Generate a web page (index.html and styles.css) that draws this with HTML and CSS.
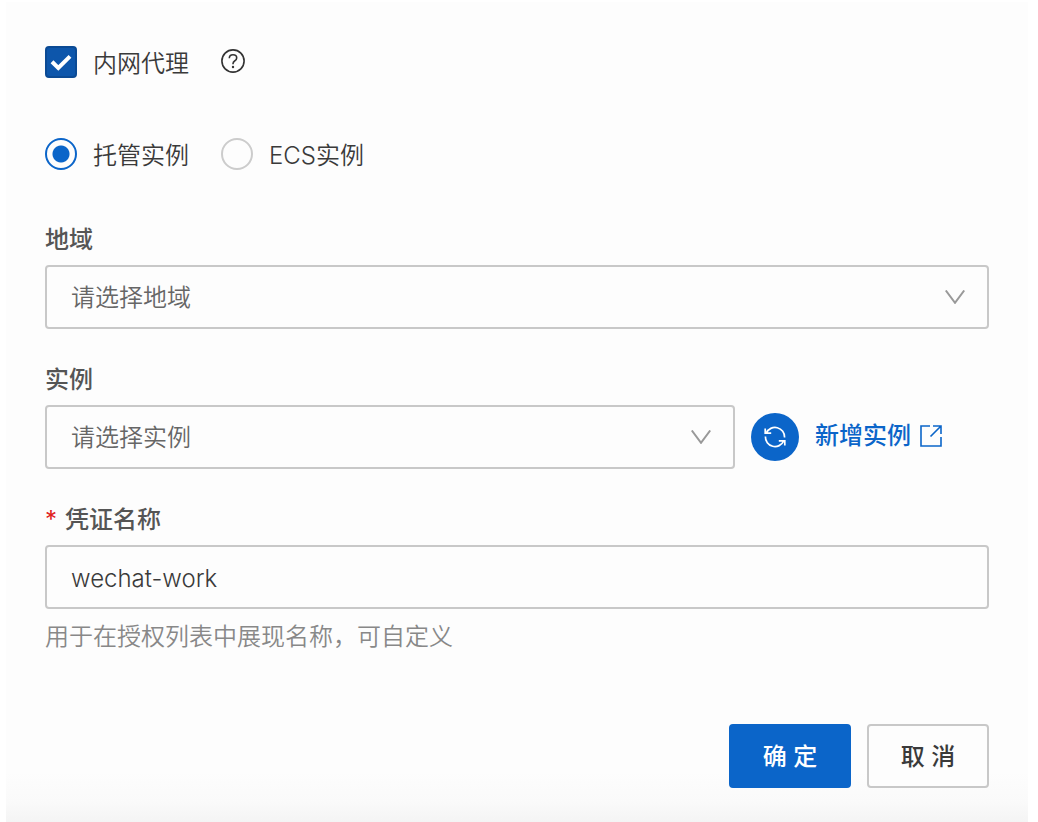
FILE: index.html
```html
<!DOCTYPE html>
<html lang="zh-CN">
<head>
<meta charset="utf-8">
<meta name="viewport" content="width=device-width, initial-scale=1">
<title>内网代理</title>
<link rel="stylesheet" href="styles.css">
</head>
<body>
<form class="panel">
  <div class="options">
    <label class="option">
      <span class="stack">
        <input class="checkbox" type="checkbox" checked>
        <svg class="tick" width="32" height="32" viewBox="0 0 32 32" aria-hidden="true"><path d="M7 15.800 13.300 22 25 10.400" fill="none" stroke="#fff" stroke-width="4"/></svg>
      </span>
      <span>内网代理</span>
    </label>
    <button class="help" type="button" aria-label="帮助">
      <svg width="24" height="24" viewBox="0 0 24 24" fill="none" stroke="#333" stroke-width="1.600"><circle cx="12" cy="12" r="11.100"/><path d="M8.300 9.300C8.300 7 9.900 5.700 12 5.700s3.700 1.300 3.700 3.200c0 1.600-1 2.400-2.100 3.100-1.100.7-1.600 1.200-1.600 2.700v.6"/><circle cx="12" cy="18" r="1.200" fill="#333" stroke="none"/></svg>
    </button>
  </div>

  <div class="options" role="radiogroup">
    <label class="option"><input class="radio" type="radio" name="kind" checked><span>托管实例</span></label>
    <label class="option"><input class="radio" type="radio" name="kind"><span>ECS实例</span></label>
  </div>

  <div class="field">
    <label class="label" for="region">地域</label>
    <div class="stack">
      <select class="control" id="region"><option>请选择地域</option></select>
      <svg class="chevron" width="20" height="14" viewBox="0 0 20 14" aria-hidden="true"><path d="M.8.500 10 12.800 19.200.500" fill="none" stroke="#999" stroke-width="2"/></svg>
    </div>
  </div>

  <div class="field">
    <label class="label" for="instance">实例</label>
    <div class="instance-row">
      <div class="stack">
        <select class="control" id="instance"><option>请选择实例</option></select>
        <svg class="chevron" width="20" height="14" viewBox="0 0 20 14" aria-hidden="true"><path d="M.8.500 10 12.800 19.200.500" fill="none" stroke="#999" stroke-width="2"/></svg>
      </div>
      <div class="actions">
        <button class="refresh" type="button" aria-label="刷新">
          <svg width="24" height="24" viewBox="0 0 24 24" fill="none" stroke="#fff" stroke-width="1.700"><path d="M3.300 8A9.600 9.600 0 0 1 21.600 12.500M20.700 16A9.600 9.600 0 0 1 2.400 11.500M2.200 3.500v4.700h6M21.800 20.500v-4.700h-6"/></svg>
        </button>
        <a class="link" href="#">新增实例
          <svg width="22" height="22" viewBox="0 0 22 22" fill="none" stroke="#0b65c9" stroke-width="1.600" aria-hidden="true"><path d="M10 1H1v20h20V12M13 1h8v8M21 1 10.500 11.500"/></svg>
        </a>
      </div>
    </div>
  </div>

  <div class="field">
    <label class="label" for="name"><span class="required">*</span>凭证名称</label>
    <input class="control" id="name" type="text" value="wechat-work" aria-describedby="name-hint">
    <div class="hint" id="name-hint">用于在授权列表中展现名称，可自定义</div>
  </div>

  <div class="footer">
    <button class="button primary" type="submit">确 定</button>
    <button class="button" type="button">取 消</button>
  </div>
</form>
</body>
</html>
```
FILE: styles.css
```css
* { box-sizing: border-box; }

body {
  margin: 0;
  background: #fff;
  font-family: Inter, "Noto Sans CJK SC", sans-serif;
  font-size: 24px;
  font-weight: 350;
  line-height: 32px;
  color: #3a3a3a;
}

button, input, select { margin: 0; font: inherit; color: inherit; }

.panel {
  display: flex;
  flex-direction: column;
  min-height: calc(100vh - 2px);
  margin: 2px 10px 0 6px;
  padding: 44px 39px 34px;
  background: linear-gradient(to top, #f4f4f4, #fafafa 20px, #fdfdfd 50px);
}

.options { display: flex; align-items: center; gap: 32px; margin-bottom: 60px; }
.options + .field { margin-top: -7px; }
.option { display: flex; align-items: center; gap: 16px; }
.option > span:last-child { padding-top: 2px; margin-bottom: -2px; }

.stack { display: grid; align-items: center; }
.stack > * { grid-area: 1 / 1; }

.checkbox, .radio { appearance: none; width: 32px; height: 32px; }
.checkbox { border: 2px solid #0b4a94; border-radius: 4px; background: #0d56ab; }
.tick { pointer-events: none; visibility: hidden; }
.checkbox:checked + .tick { visibility: visible; }

.radio { border: 2px solid #ccc; border-radius: 50%; background: #fdfdfd; }
.radio:checked {
  border-color: #0b65c9;
  background: radial-gradient(circle, #0b65c9 8px, #fdfdfd 9px);
}

.help { display: flex; padding: 0 0 2px; border: 0; background: none; }

.field { display: flex; flex-direction: column; gap: 8px; margin-bottom: 34px; }
.label { font-weight: 500; line-height: 34px; color: #555; }
.required { margin-right: 8px; font-weight: 400; color: #e02020; }

.control {
  appearance: none;
  width: 100%;
  height: 64px;
  padding: 2px 24px 0;
  border: 2px solid #c8c8c8;
  border-radius: 4px;
  background: transparent;
}
select.control { padding-right: 56px; color: #666; }
.chevron { justify-self: end; margin-right: 24px; pointer-events: none; }

.instance-row { display: grid; grid-template-columns: minmax(0, 1fr) 238px; gap: 16px; }
.actions { display: flex; align-items: center; gap: 16px; }
.refresh {
  display: grid;
  place-items: center;
  width: 48px;
  height: 48px;
  padding: 0;
  border: 0;
  border-radius: 50%;
  background: #0b65c9;
}
.link {
  display: flex;
  align-items: center;
  gap: 9px;
  padding-bottom: 2px;
  font-weight: 500;
  white-space: nowrap;
  color: #0b65c9;
  text-decoration: none;
}

.hint { line-height: 40px; color: #888; }

.footer { display: flex; justify-content: flex-end; gap: 16px; margin-top: auto; }
.button {
  width: 122px;
  height: 64px;
  padding: 2px 0 0;
  border: 2px solid #c8c8c8;
  border-radius: 4px;
  background: #fdfdfd;
  font-weight: 500;
}
.button.primary { border-color: #0b65c9; background: #0b65c9; color: #fff; }
```
